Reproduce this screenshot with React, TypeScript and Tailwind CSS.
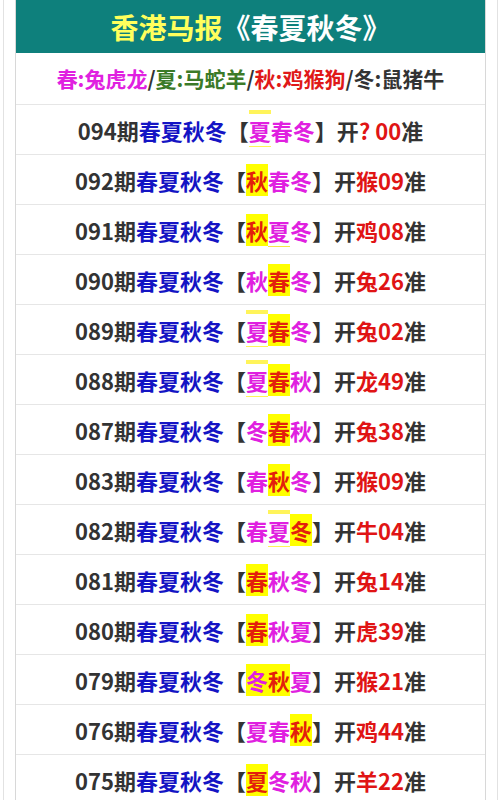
import React from 'react'

type Mark = 'full' | 'top' | 'under' | 'none'

interface Pick {
  ch: string
  mark: Mark
  // text colour inside the pick
  hit?: boolean
}

interface Row {
  no: string
  picks: Pick[]
  animal: string
  num: string
}

const p = (ch: string, mark: Mark = 'none', hit = false): Pick => ({ ch, mark, hit })

const rows: Row[] = [
  { no: '094', picks: [p('夏', 'top'), p('春'), p('冬')], animal: '?', num: ' 00' },
  { no: '092', picks: [p('秋', 'full', true), p('春'), p('冬')], animal: '猴', num: '09' },
  { no: '091', picks: [p('秋', 'full', true), p('夏', 'under'), p('冬')], animal: '鸡', num: '08' },
  { no: '090', picks: [p('秋'), p('春', 'full', true), p('冬')], animal: '兔', num: '26' },
  { no: '089', picks: [p('夏', 'top'), p('春', 'full', true), p('冬')], animal: '兔', num: '02' },
  { no: '088', picks: [p('夏', 'top'), p('春', 'full', true), p('秋')], animal: '龙', num: '49' },
  { no: '087', picks: [p('冬'), p('春', 'full', true), p('秋')], animal: '兔', num: '38' },
  { no: '083', picks: [p('春'), p('秋', 'full', true), p('冬')], animal: '猴', num: '09' },
  { no: '082', picks: [p('春'), p('夏', 'top'), p('冬', 'full', true)], animal: '牛', num: '04' },
  { no: '081', picks: [p('春', 'full', true), p('秋'), p('冬')], animal: '兔', num: '14' },
  { no: '080', picks: [p('春', 'full', true), p('秋'), p('夏')], animal: '虎', num: '39' },
  { no: '079', picks: [p('冬', 'full'), p('秋', 'full', true), p('夏')], animal: '猴', num: '21' },
  { no: '076', picks: [p('夏'), p('春'), p('秋', 'full', true)], animal: '鸡', num: '44' },
  { no: '075', picks: [p('夏', 'full', true), p('冬'), p('秋')], animal: '羊', num: '22' },
]

function PickChar({ pick }: { pick: Pick }) {
  const color = pick.hit ? 'text-[#e3200c]' : 'text-[#e020e0]'
  if (pick.mark === 'full') {
    return <span className={`bg-[#ffff00] ${color}`}>{pick.ch}</span>
  }
  if (pick.mark === 'top') {
    return <span className={`border-t-[4px] border-b border-[#fff45a] ${color}`}>{pick.ch}</span>
  }
  if (pick.mark === 'under') {
    return <span className={`border-b border-[#f5e64a] ${color}`}>{pick.ch}</span>
  }
  return <span className={color}>{pick.ch}</span>
}

function ResultRow({ row }: { row: Row }) {
  return (
    <div className="h-[50px] flex items-center justify-center border-b border-[#e6e6e6]">
      <div className="text-[22px] font-bold leading-[28px] text-[#333] whitespace-pre">
        <span>{row.no}期</span>
        <span className="text-[#1414c4]">春夏秋冬</span>
        <span>【</span>
        {row.picks.map((pk, i) => (
          <PickChar key={i} pick={pk} />
        ))}
        <span>】开</span>
        <span className="text-[#e01414]">
          {row.animal}
          {row.num}
        </span>
        <span>准</span>
      </div>
    </div>
  )
}

export default function App() {
  return (
    <div
      className="w-full min-h-[800px] bg-white px-[3px]"
      style={{ fontFamily: '"Noto Sans CJK SC", "Noto Sans", sans-serif' }}
    >
      <div className="min-h-[800px] border-x border-[#e2e2e2] px-[11px]">
        <div className="border-x border-[#d8d8d8]">
          {/* header */}
          <div className="h-[53px] bg-[#0e807c] flex items-center justify-center">
            <div className="text-[28px] font-bold leading-none">
              <span className="text-[#ffff5c]">香港马报</span>
              <span className="text-white">《春夏秋冬》</span>
            </div>
          </div>

          {/* legend */}
          <div className="h-[52px] flex items-center justify-center border-b border-[#e6e6e6]">
            <div className="text-[21px] font-bold text-[#333]">
              <span className="text-[#e020e0]">春:兔虎龙</span>/
              <span className="text-[#3b7a28]">夏:马蛇羊</span>/
              <span className="text-[#e01818]">秋:鸡猴狗</span>/
              <span>冬:鼠猪牛</span>
            </div>
          </div>

          {rows.map((r) => (
            <ResultRow key={r.no} row={r} />
          ))}
        </div>
      </div>
    </div>
  )
}
